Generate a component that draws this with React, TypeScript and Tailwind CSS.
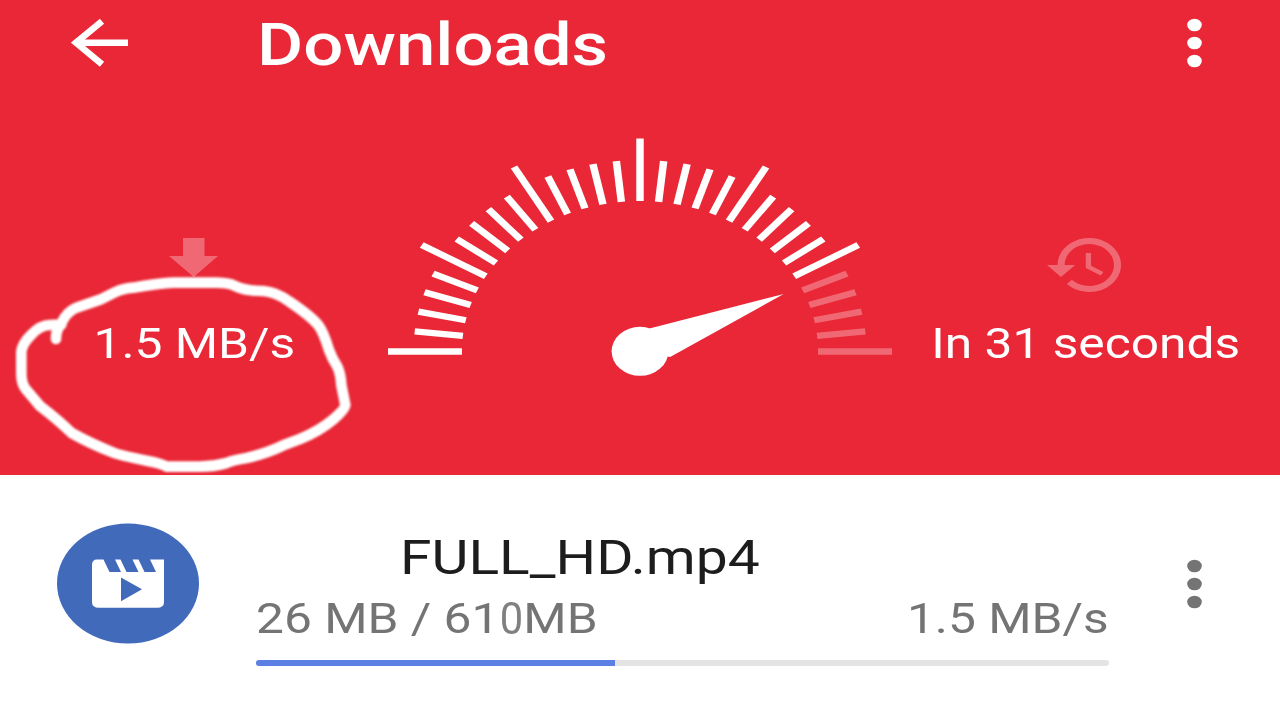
import React from "react";

const TICKS = Array.from({ length: 31 }, (_, i) => {
  const angle = (i * 6 * Math.PI) / 180;
  const outer = i % 5 === 0 ? 213 : 191.5;
  const inner = 150.5;
  return {
    x1: 213 - Math.cos(angle) * outer,
    y1: 213.5 - Math.sin(angle) * outer,
    x2: 213 - Math.cos(angle) * inner,
    y2: 213.5 - Math.sin(angle) * inner,
    dim: i > 25,
  };
});

function Dots({ className }: { className: string }) {
  return (
    <svg className={className} width="16" height="50" viewBox="0 0 16 50" fill="currentColor">
      <ellipse cx="8.5" cy="7" rx="7.3" ry="6.3" />
      <ellipse cx="8.5" cy="25" rx="7.3" ry="6.3" />
      <ellipse cx="8.5" cy="43" rx="7.3" ry="6.3" />
    </svg>
  );
}

function AppBar() {
  return (
    <div className="flex h-[86px] items-center pl-[71px] pr-[78px]">
      <svg className="shrink-0" width="58" height="50" viewBox="0 0 58 50" fill="none" stroke="currentColor" strokeWidth="6.4">
        <path d="M57 24.7H6" />
        <path d="M31 3.2 5 24.7 31 46.2" strokeWidth="6.6" />
      </svg>
      <h1 className="ml-[128px] flex-1 origin-left scale-x-[1.18] whitespace-nowrap pt-[4px] text-[60px] leading-none font-medium">
        Downloads
      </h1>
      <Dots className="shrink-0" />
    </div>
  );
}

function Gauge() {
  return (
    <svg className="mt-[52px]" width="504" height="242" viewBox="0 0 426 242" preserveAspectRatio="none">
      {TICKS.map((t, i) => (
        <line key={i} x1={t.x1} y1={t.y1} x2={t.x2} y2={t.y2} stroke="#fff" strokeWidth="6.3" opacity={t.dim ? 0.3 : 1} />
      ))}
      <ellipse cx="213" cy="213.3" rx="24" ry="24.5" fill="#fff" />
      <path d="M221 190.6 334.5 156 238.5 219 213 213Z" fill="#fff" />
    </svg>
  );
}

function Scribble() {
  return (
    <svg
      className="pointer-events-none absolute top-[260px] left-0 blur-[1.2px]"
      width="370"
      height="215"
      viewBox="0 120 1110 645"
      fill="none"
    >
      <path
        d="M168 357 Q167 332 184 310 Q200 276 227 264 L300 239 L345 217 Q365 206 400 203 Q480 189 520 188 L650 188 Q690 189 705 198 Q735 213 790 213 Q830 216 870 246 Q935 290 955 316 Q970 335 987 390 Q996 415 1012 440 Q1022 460 1024 495 L1036 555 Q1035 568 1000 598 Q960 632 900 657 L850 676 Q800 700 740 714 Q700 720 680 729 Q640 740 600 740 L500 740 Q485 730 440 722 Q360 706 340 698 Q270 670 215 639 Q175 600 120 558 L76 506 Q64 490 64 460 L64 395 Q67 370 95 343 Q120 316 150 315 L184 314"
        stroke="#fff"
        strokeWidth="32"
        strokeLinecap="round"
        strokeLinejoin="round"
      />
    </svg>
  );
}

function StatsPanel() {
  return (
    <div className="grid grid-cols-[388px_504px_388px]">
      <div className="flex flex-col items-center pt-[152px]">
        <svg className="-ml-[2px]" width="49" height="40" viewBox="0 0 49 40" fill="#fff" opacity="0.3">
          <path d="M14 0H35.5V18H49L24.7 39 0 18H14Z" />
        </svg>
        <p className="mt-[44px] scale-x-[1.155] whitespace-nowrap text-[43px] leading-none">1.5 MB/s</p>
      </div>
      <Gauge />
      <div className="flex flex-col items-center pt-[152px]">
        <svg className="-ml-[4px]" width="74" height="54" viewBox="1 3 21 18" preserveAspectRatio="none" fill="#fff" opacity="0.3">
          <path d="M13 3c-4.97 0-9 4.03-9 9H1l3.89 3.89.07.14L9 12H6c0-3.87 3.13-7 7-7s7 3.13 7 7-3.13 7-7 7c-1.93 0-3.68-.79-4.94-2.06l-1.42 1.42C8.27 19.99 10.51 21 13 21c4.97 0 9-4.03 9-9s-4.03-9-9-9zm-1 5v5l4.28 2.54.72-1.21-3.5-2.08V8H12z" />
        </svg>
        <p className="mt-[30px] scale-x-[1.155] whitespace-nowrap text-[43px] leading-none">In 31 seconds</p>
      </div>
    </div>
  );
}

function DownloadRow() {
  return (
    <div className="flex pt-[48px] pl-[57px]">
      <svg className="shrink-0" width="142" height="121" viewBox="0 0 142 121">
        <ellipse cx="71" cy="60.5" rx="71" ry="60" fill="#416abb" />
        <path
          d="M40 36.5H46.5L52.5 49H64L58 36.5H63.5L69.5 49H81.5L75.5 36.5H81.5L87.5 49H99L93 36.5H107V79Q107 84.8 100 84.8H42Q35 84.8 35 79V42Q35 36.5 40 36.5Z"
          fill="#fff"
        />
        <path d="M64 54.5 85 66.3 64 78.2Z" fill="#416abb" />
      </svg>
      <div className="ml-[57px] flex w-[853px] flex-col">
        <p className="ml-[144px] mt-[11px] origin-left scale-x-[1.187] whitespace-nowrap text-[48px] leading-none text-[#1d1d1d]">
          FULL_HD.mp4
        </p>
        <div className="mt-[15px] flex justify-between text-[43px] leading-none whitespace-nowrap text-[#747474]">
          <p className="origin-left scale-x-[1.155]">
            26 MB / 61<span className="-mr-[3.5px] inline-block origin-left scale-x-[0.84] scale-y-[1.04] text-[#808080]">0</span>MB
          </p>
          <p className="origin-right scale-x-[1.155]">1.5 MB/s</p>
        </div>
        <div className="mt-[20px] h-[6px] overflow-hidden rounded-full bg-[#e4e4e4]">
          <div className="h-full w-[359px] bg-[#5b7fe3]" />
        </div>
      </div>
      <Dots className="mt-[36px] ml-[77px] shrink-0 text-[#747474]" />
    </div>
  );
}

export default function App() {
  return (
    <div className="h-[720px] w-[1280px] overflow-hidden bg-white font-['Roboto',sans-serif]">
      <header className="relative h-[475px] bg-[#e92736] text-white">
        <AppBar />
        <StatsPanel />
        <Scribble />
      </header>
      <main>
        <DownloadRow />
      </main>
    </div>
  );
}
